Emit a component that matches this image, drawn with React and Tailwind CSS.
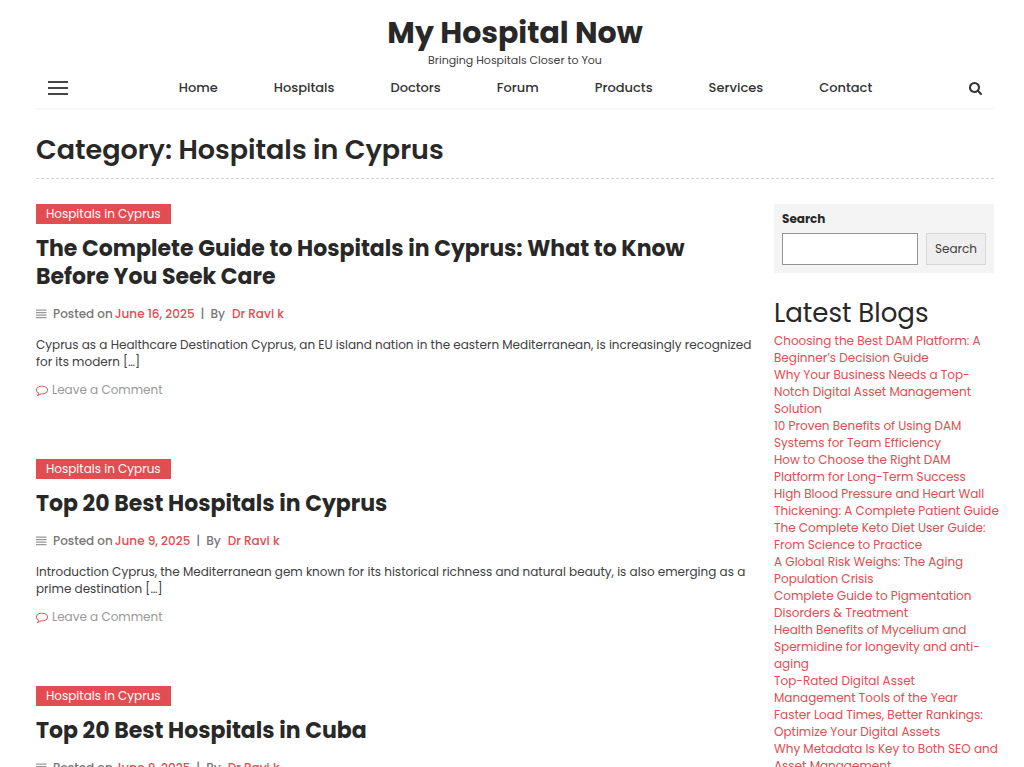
import React from "react";

const NAV = ["Home", "Hospitals", "Doctors", "Forum", "Products", "Services", "Contact"];

const POSTS = [
  {
    title: "The Complete Guide to Hospitals in Cyprus: What to Know Before You Seek Care",
    date: "June 16, 2025",
    excerpt:
      "Cyprus as a Healthcare Destination Cyprus, an EU island nation in the eastern Mediterranean, is increasingly recognized for its modern […]",
  },
  {
    title: "Top 20 Best Hospitals in Cyprus",
    date: "June 9, 2025",
    excerpt:
      "Introduction Cyprus, the Mediterranean gem known for its historical richness and natural beauty, is also emerging as a prime destination […]",
  },
  {
    title: "Top 20 Best Hospitals in Cuba",
    date: "June 9, 2025",
  },
];

const BLOGS = [
  "Choosing the Best DAM Platform: A Beginner’s Decision Guide",
  "Why Your Business Needs a Top-Notch Digital Asset Management Solution",
  "10 Proven Benefits of Using DAM Systems for Team Efficiency",
  "How to Choose the Right DAM Platform for Long-Term Success",
  "High Blood Pressure and Heart Wall Thickening: A Complete Patient Guide",
  "The Complete Keto Diet User Guide: From Science to Practice",
  "A Global Risk Weighs: The Aging Population Crisis",
  "Complete Guide to Pigmentation Disorders & Treatment",
  "Health Benefits of Mycelium and Spermidine for longevity and anti-aging",
  "Top-Rated Digital Asset Management Tools of the Year",
  "Faster Load Times, Better Rankings: Optimize Your Digital Assets",
  "Why Metadata Is Key to Both SEO and Asset Management",
];

function LinesIcon() {
  return (
    <svg viewBox="0 0 11 10" className="mr-[6px] h-[10px] w-[11px] fill-[#999]" aria-hidden="true">
      <path d="M0 .5h10.500v1.300H0zM0 3h10.500v1.300H0zM0 5.500h10.500v1.300H0zM0 8h10.500v1.300H0z" />
    </svg>
  );
}

function CommentIcon() {
  return (
    <svg viewBox="0 0 1792 1792" className="size-3 fill-[#e14d50]" aria-hidden="true">
      <path d="M896 384q-204 0-381.5 69.5T232 641 128 896q0 112 71.5 213.5T401 1285l87 50-27 96q-24 91-70 172 152-63 275-171l43-38 57 6q69 8 130 8 204 0 381.5-69.5t282.5-187.5 104.5-255-104.5-255-282.5-187.5T896 384zm896 512q0 174-120 321.5t-326 233-450 85.5q-70 0-145-8-198 175-460 242-49 14-114 22h-5q-15 0-27-10.5t-16-27.5v-1q-3-4-.5-12t2-10 4.5-9.5l6-9 7-8.5 8-9q7-8 31-34.5t34.5-38 31-39.5 32.5-51 27-59 26-76q-157-89-247.5-220T0 896q0-130 71-248.5t191-204.5 286-136.5 348-50.5 348 50.5 286 136.5 191 204.5 71 248.5z" />
    </svg>
  );
}

function SearchIcon() {
  return (
    <svg viewBox="0 0 1664 1664" className="size-[13px] fill-[#333]" aria-hidden="true">
      <path d="M1152 704q0-185-131.5-316.5T704 256 387.5 387.5 256 704t131.5 316.5T704 1152t316.5-131.5T1152 704zm512 832q0 52-38 90t-90 38q-54 0-90-38l-343-342q-179 124-399 124-143 0-273.5-55.5t-225-150-150-225T0 704t55.500-273.500 150-225 225-150T704 0t273.500 55.500 225 150 150 225T1408 704q0 220-124 399l343 343q37 37 37 90z" />
    </svg>
  );
}

function Header() {
  return (
    <header className="border-b-2 border-[#f8f8f8]">
      <div className="text-center">
        <p className="text-[30px] leading-10 font-bold text-[#282828]">
          <a href="#">My Hospital Now</a>
        </p>
        <p className="text-[11px] leading-[15px] text-[#404040]">Bringing Hospitals Closer to You</p>
      </div>
      <div className="flex h-10 items-center justify-between px-3">
        <button type="button" aria-label="Menu" className="flex w-5 flex-col gap-1">
          <span className="h-0.5 w-full bg-[#444]" />
          <span className="h-0.5 w-full bg-[#444]" />
          <span className="h-0.5 w-full bg-[#444]" />
        </button>
        <nav className="ml-[14px] flex gap-14 text-[13px] font-medium text-[#333]">
          {NAV.map((n) => (
            <a key={n} href="#">{n}</a>
          ))}
        </nav>
        <button type="button" aria-label="Search">
          <SearchIcon />
        </button>
      </div>
    </header>
  );
}

function Post({ title, date, excerpt }) {
  return (
    <article>
      <a href="#" className="block w-fit bg-[#e14d50] px-[10px] text-xs leading-5 text-white">
        Hospitals in Cyprus
      </a>
      <h2 className="mt-[11px] text-[22px] leading-7 font-bold text-[#282828]">
        <a href="#">{title}</a>
      </h2>
      <div className="mt-[13px] flex items-center text-xs leading-5 font-medium text-[#777]">
        <LinesIcon />
        <span>Posted on</span>
        <a href="#" className="ml-[2px] text-[#e14d50]">{date}</a>
        <span className="mx-[6px]">|</span>
        <span>By</span>
        <a href="#" className="ml-[7px] text-[#e14d50]">Dr Ravi k</a>
      </div>
      {excerpt && <p className="mt-3 text-xs leading-[17px] text-[#404040]">{excerpt}</p>}
      <a href="#" className="mt-[10px] flex w-fit items-center gap-1 text-xs leading-5 text-[#999]">
        <CommentIcon />
        Leave a Comment
      </a>
    </article>
  );
}

function Sidebar() {
  return (
    <aside className="w-[220px] shrink-0">
      <form className="bg-[#f4f4f4] p-2" onSubmit={(e) => e.preventDefault()}>
        <label htmlFor="site-search" className="block text-xs leading-[14px] font-bold text-[#282828]">
          Search
        </label>
        <div className="mt-[7px] flex gap-2">
          <input id="site-search" type="search" className="h-8 min-w-0 flex-1 border border-[#949494] bg-white px-2 text-xs" />
          <button type="submit" className="h-8 border border-[#d5d5d5] bg-[#eee] px-2 text-xs text-[#404040]">Search</button>
        </div>
      </form>
      <h2 className="mt-6 text-[26px] leading-8 text-[#282828]">Latest Blogs</h2>
      <ul className="mt-[3px] -mr-[5px] text-xs leading-[17px] text-[#e14d50]">
        {BLOGS.map((b) => (
          <li key={b}><a href="#">{b}</a></li>
        ))}
      </ul>
    </aside>
  );
}

export default function App() {
  return (
    <div className="bg-white pt-[13px] pr-[30px] pl-9 font-['Poppins',Inter,sans-serif]">
      <Header />
      <h1 className="mt-[22px] border-b border-dashed border-[#d5d5d5] pb-[10px] text-[27px] leading-9 font-semibold text-[#282828]">
        Category: Hospitals in Cyprus
      </h1>
      <div className="mt-[25px] flex items-start justify-between gap-4">
        <main className="flex min-w-0 flex-1 flex-col gap-[59px]">
          {POSTS.map((p) => (
            <Post key={p.title} {...p} />
          ))}
        </main>
        <Sidebar />
      </div>
    </div>
  );
}
